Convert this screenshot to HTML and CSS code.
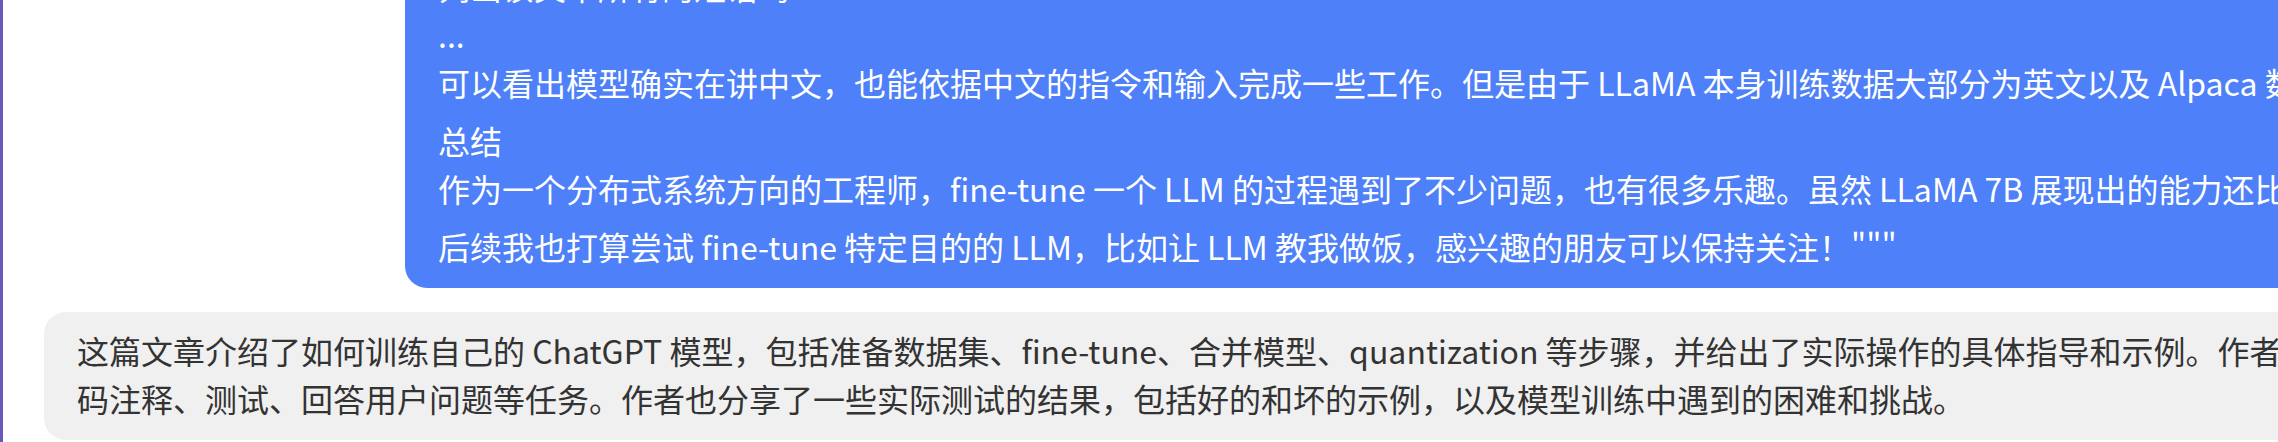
FILE: index.html
```html
<!DOCTYPE html>
<html lang="zh-CN">
<head>
<meta charset="utf-8">
<title>Chat</title>
<link rel="stylesheet" href="styles.css">
</head>
<body>
<div class="app">
  <main class="chat">
    <div class="msg msg-user">
      <div class="bubble bubble-user">
        <p>列出该文本所有的短语吗<br>...<br>可以看出模型确实在讲中文，也能依据中文的指令和输入完成一些工作。但是由于 LLaMA 本身训练数据大部分为英文以及 Alpaca 数据集也是英文的，模型的中文能力还比较有限。</p>
        <p>总结<br>作为一个分布式系统方向的工程师，fine-tune 一个 LLM 的过程遇到了不少问题，也有很多乐趣。虽然 LLaMA 7B 展现出的能力还比不上 ChatGPT，但是已经足够让人惊喜了。</p>
        <p>后续我也打算尝试 fine-tune 特定目的的 LLM，比如让 LLM 教我做饭，感兴趣的朋友可以保持关注！"""</p>
      </div>
    </div>
    <div class="msg msg-bot">
      <div class="bubble bubble-bot">
        <p>这篇文章介绍了如何训练自己的 ChatGPT 模型，包括准备数据集、fine-tune、合并模型、quantization 等步骤，并给出了实际操作的具体指导和示例。作者使用训练好的模型完成了生成代<br>码注释、测试、回答用户问题等任务。作者也分享了一些实际测试的结果，包括好的和坏的示例，以及模型训练中遇到的困难和挑战。</p>
      </div>
    </div>
  </main>
</div>
</body>
</html>
```
FILE: styles.css
```css
html, body {
  margin: 0;
  height: 100%;
  overflow: hidden;
  background: #ffffff;
}

.app {
  box-sizing: border-box;
  height: 442px;
  border-left: 3px solid #6a57bd;
  padding-bottom: 2px;
  display: flex;
  flex-direction: column;
  justify-content: flex-end;
  overflow: hidden;
}

.chat {
  width: 3400px;
  padding-left: 41px;
  display: flex;
  flex-direction: column;
  gap: 24px;
}

.msg-user {
  padding-left: 361px;
}

.bubble {
  border-radius: 22px;
  padding: 14px 33px 18px;
  font-family: "Noto Sans CJK SC", "PingFang SC", sans-serif;
  font-size: 32px;
  line-height: 48px;
  white-space: nowrap;
}

.bubble p {
  margin: 0;
}

.bubble p + p {
  margin-top: 10px;
}

.bubble-user {
  background: #4d80f9;
  color: #ffffff;
}

.bubble-bot {
  background: #f0f0f0;
  color: #333333;
}
```
